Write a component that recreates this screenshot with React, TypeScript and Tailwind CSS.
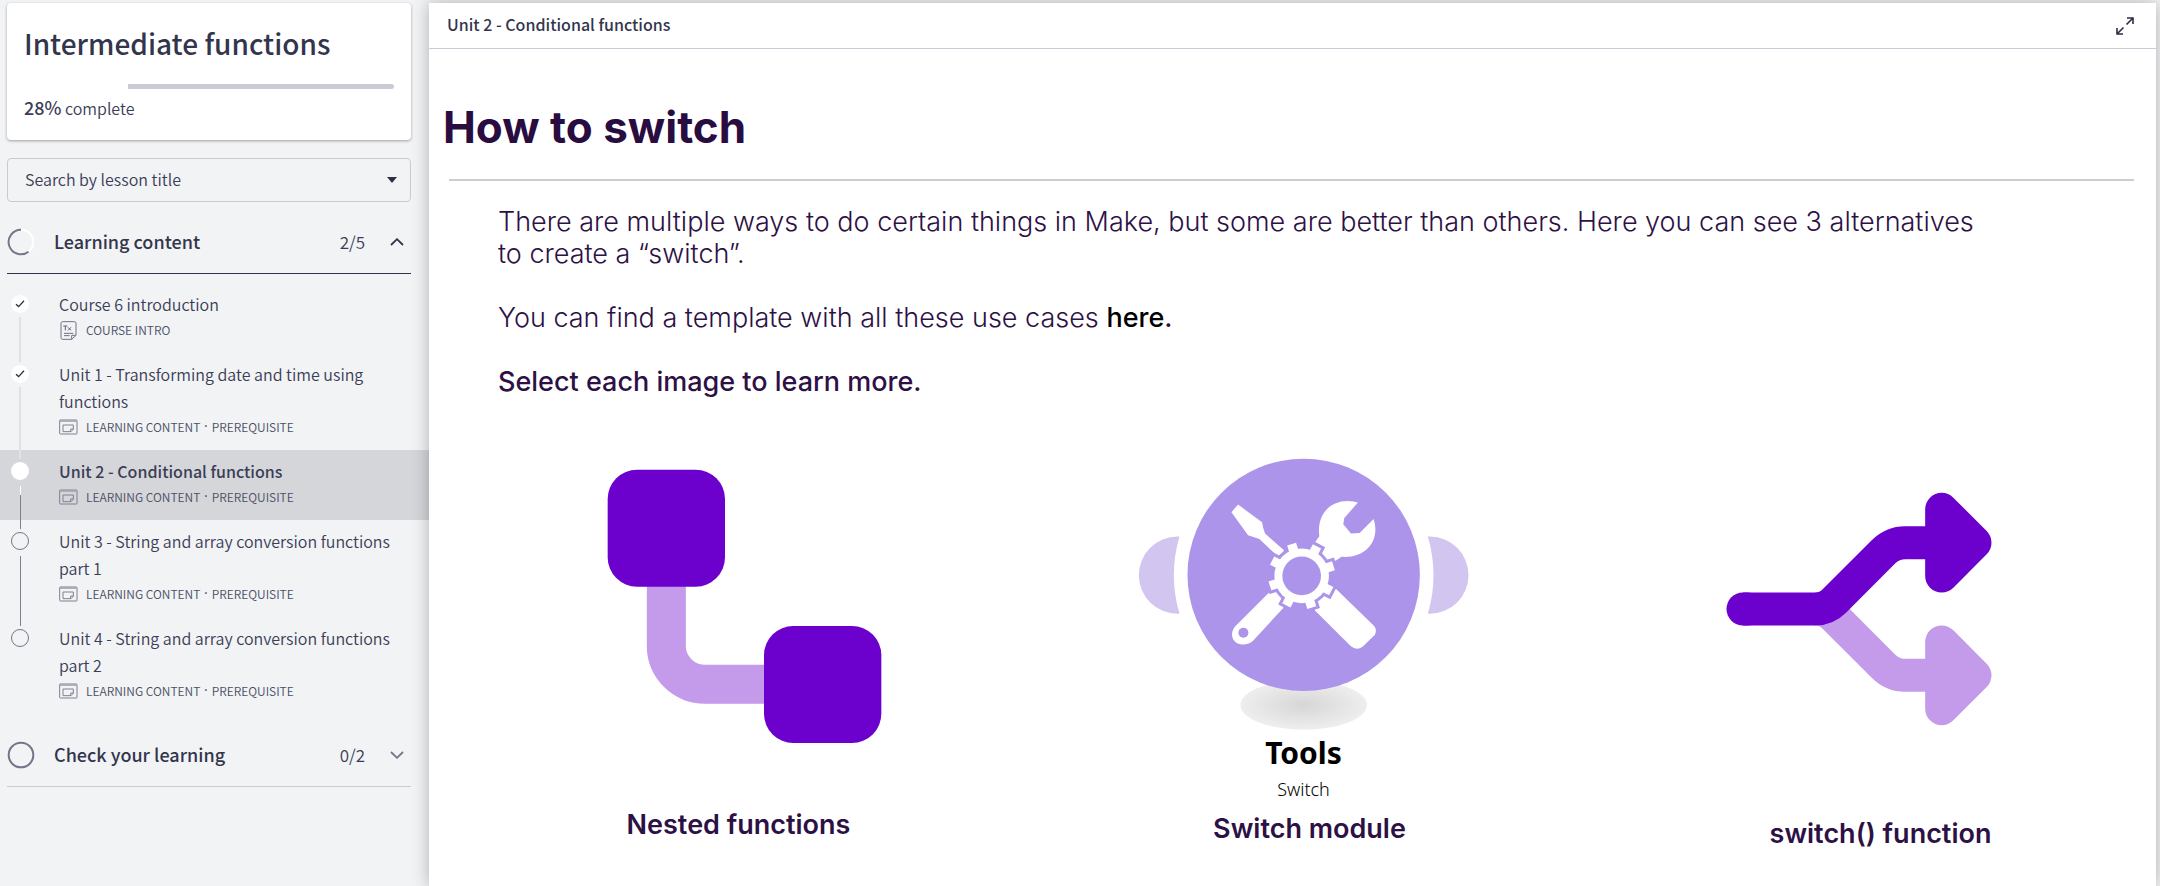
import React from "react";

type Status = "done" | "current" | "todo";
type Lesson = { title: string; meta: string[]; doc?: boolean; status: Status };

const lessons: Lesson[] = [
  { title: "Course 6 introduction", meta: ["COURSE INTRO"], doc: true, status: "done" },
  { title: "Unit 1 - Transforming date and time using functions", meta: ["LEARNING CONTENT", "PREREQUISITE"], status: "done" },
  { title: "Unit 2 - Conditional functions", meta: ["LEARNING CONTENT", "PREREQUISITE"], status: "current" },
  { title: "Unit 3 - String and array conversion functions part 1", meta: ["LEARNING CONTENT", "PREREQUISITE"], status: "todo" },
  { title: "Unit 4 - String and array conversion functions part 2", meta: ["LEARNING CONTENT", "PREREQUISITE"], status: "todo" },
];

function DocIcon() {
  return (
    <svg viewBox="0 0 57 57" className="size-[19px] shrink-0" fill="none" stroke="#6f7285" strokeWidth="3" aria-hidden="true">
      <path d="M11 2H46a5 5 0 0 1 5 5V43L38 55H11a5 5 0 0 1-5-5V7a5 5 0 0 1 5-5Z" />
      <path d="M51 43H38V55M15 37H43M15 44H32" />
      <path d="M13 15H25M19 15V28M27 19L36 28M36 19L27 28" stroke="#5b5e75" />
    </svg>
  );
}

function ContentIcon() {
  return (
    <svg viewBox="0 0 57 57" className="size-[19px] shrink-0" fill="none" stroke="#7d8091" strokeWidth="3" aria-hidden="true">
      <rect x="2" y="6" width="52" height="42" rx="2" />
      <path d="M3 9H53" stroke="#a3a5b3" strokeWidth="5" />
      <path d="M12 21H43V34L36 41H12ZM43 33H35V41" />
    </svg>
  );
}

function StatusDot({ status }: { status: Status }) {
  if (status === "todo") return <span className="size-[18px] shrink-0 rounded-full border border-[#73768a]" />;
  return (
    <span className="flex size-[18px] shrink-0 items-center justify-center rounded-full bg-white">
      {status === "done" && (
        <svg viewBox="0 0 10 10" className="size-[10px]" fill="none" stroke="#2d2f45" strokeWidth="1.3" aria-hidden="true">
          <path d="M1 5.2L3.6 7.6L9 1.8" />
        </svg>
      )}
    </span>
  );
}

function Connector({ status }: { status: Status }) {
  if (status === "done") return <span className="-mb-[9px] mt-1 w-[2px] flex-1 bg-[#dfe1e4]" />;
  return (
    <span className="-mb-[9px] mt-[6px] flex w-px flex-1 flex-col">
      {status === "current" && <span className="h-[9px] bg-white" />}
      <span className="flex-1 bg-[#7d8091]" />
    </span>
  );
}

function LessonRow({ lesson, last }: { lesson: Lesson; last: boolean }) {
  const current = lesson.status === "current";
  return (
    <li className={current ? "bg-[#d5d6da]" : ""}>
      <a href="#lesson" className="flex pl-[11px] pr-[30px]">
        <span className="relative z-10 flex w-[18px] shrink-0 flex-col items-center pt-3">
          <StatusDot status={lesson.status} />
          {!last && <Connector status={lesson.status} />}
        </span>
        <span className="block pb-[11px] pl-[30px] pt-2">
          <span className={current ? "block text-base font-medium leading-[27px]" : "block text-base leading-[27px]"}>{lesson.title}</span>
          <span className="flex h-6 items-center text-xs text-[#4c4f66]">
            {lesson.doc ? <DocIcon /> : <ContentIcon />}
            {lesson.meta.map((part, i) => (
              <React.Fragment key={part}>
                {i > 0 && <span className="ml-1 font-['Noto_Sans',sans-serif] font-medium">·</span>}
                <span className={i > 0 ? "ml-1" : "ml-2"}>{part}</span>
              </React.Fragment>
            ))}
          </span>
        </span>
      </a>
    </li>
  );
}

function Chevron({ up }: { up?: boolean }) {
  return (
    <svg viewBox="0 0 14 8" className="h-2 w-[14px]" fill="none" stroke={up ? "#33354d" : "#73768a"} strokeWidth="1.8" aria-hidden="true">
      <path d={up ? "M1 7L7 1.2L13 7" : "M1 1L7 6.8L13 1"} />
    </svg>
  );
}

function Sidebar() {
  return (
    <aside className="w-[429px] shrink-0 pt-[3px] font-['Noto_Sans_CJK_SC','Noto_Sans',sans-serif] font-[350] text-[#3b3d56]">
      <section className="ml-[7px] mr-[18px] rounded-[4px] bg-white px-[17px] pb-5 pt-5 shadow-[0_1px_3px_rgba(0,0,0,0.35)]">
        <h1 className="text-[28px] font-medium leading-10 text-[#33354d]">Intermediate functions</h1>
        <div role="progressbar" aria-label="Course progress" aria-valuenow={28} className="mt-[21px] flex h-[5px] justify-end overflow-hidden rounded-full bg-white">
          <div className="w-[72%] bg-[#cacbd5]" />
        </div>
        <p className="mt-[6px] h-[25px] text-base leading-6"><span className="text-lg font-medium leading-6">28%</span> complete</p>
      </section>

      <div className="ml-[7px] mr-[18px] mt-[18px] flex h-11 items-center rounded-[4px] border border-[#c9cad6] pl-[17px] pr-[13px]">
        <input aria-label="Search by lesson title" placeholder="Search by lesson title" className="min-w-0 flex-1 bg-transparent pb-[2px] text-base outline-none placeholder:text-[#3b3d56]" />
        <button aria-label="Show lessons">
          <svg viewBox="0 0 10 6" className="h-[6px] w-[10px]" fill="#2d2f45" aria-hidden="true"><path d="M0 0H10L5 6Z" /></svg>
        </button>
      </div>

      <button className="ml-[7px] mr-[18px] mt-[9px] flex h-[63px] w-[404px] items-center border-b border-[#33354d] pr-[7px] text-left">
        <svg viewBox="0 0 28 28" className="size-7" fill="none" strokeWidth="2" aria-hidden="true">
          <circle cx="14" cy="14" r="12.3" stroke="#fff" />
          <path d="M14 1.7A12.3 12.3 0 1 0 21.5 23.7" stroke="#73768a" />
        </svg>
        <span className="ml-[19px] flex-1 pb-[2px] text-lg font-medium text-[#33354d]">Learning content</span>
        <span className="mr-[25px] text-[17px]">2/5</span>
        <Chevron up />
      </button>

      <ul className="mt-[9px]">
        {lessons.map((lesson, i) => (
          <LessonRow key={lesson.title} lesson={lesson} last={i === lessons.length - 1} />
        ))}
      </ul>

      <button className="ml-[7px] mr-[18px] mt-[10px] flex h-[63px] w-[404px] items-center border-b border-[#c9cad6] pr-[7px] text-left">
        <svg viewBox="0 0 28 28" className="size-7" fill="none" strokeWidth="2" aria-hidden="true">
          <circle cx="14" cy="14" r="12.3" stroke="#73768a" />
        </svg>
        <span className="ml-[19px] flex-1 pb-[2px] text-lg font-medium text-[#33354d]">Check your learning</span>
        <span className="mr-[25px] text-[17px]">0/2</span>
        <Chevron />
      </button>
    </aside>
  );
}

function NestedArt() {
  return (
    <svg viewBox="-4 0 1080 1107" className="h-[369px] w-[360px]" aria-hidden="true">
      <path d="M318 420V618A117 115 0 0 0 435 733H640" fill="none" stroke="#c49aeb" strokeWidth="117" />
      <rect x="142" y="89" width="352" height="351" rx="88" fill="#6c00cc" />
      <rect x="611" y="558" width="352" height="351" rx="88" fill="#6c00cc" />
    </svg>
  );
}

const toothAngles = [27.4, 72.4, 117.4, 162.4, 207.4, 252.4, 297.4, 342.4];

function GearShape() {
  return (
    <>
      <circle cx="605" cy="408" r="82" />
      {toothAngles.map((a) => (
        <path key={a} d="M591 340V308H619V340Z" transform={`rotate(${a} 605 408)`} />
      ))}
    </>
  );
}

function ToolsArt() {
  return (
    <svg viewBox="90 0 1080 880" className="h-[293px] w-[360px]" aria-hidden="true">
      <defs>
        <radialGradient id="ground">
          <stop offset="0" stopColor="#d6d6d6" />
          <stop offset="1" stopColor="#eeeeee" />
        </radialGradient>
      </defs>
      <ellipse cx="611" cy="796" rx="190" ry="74" fill="url(#ground)" />
      <path d="M238 290H232A116 116 0 0 0 232 522H238Q204 406 238 290Z" fill="#d2c5f0" />
      <path d="M984 290H990A116 116 0 0 1 990 522H984Q1018 406 984 290Z" fill="#d2c5f0" />
      <circle cx="611" cy="405" r="349" fill="#ab94ea" />
      <g fill="#fff">
        <path d="M414 194L394 217L444 286L478 297L528 345Q534 349 540 344L550 335L552 331L495 281L490 266L486 247Z" />
        <path d="M645 307L658 289C650 230 684 183 743 183Q762 183 774 188L733 234L730 253L753 281L779 279L821 237C842 300 800 356 725 351L708 362L670 375L645 345Z" />
        <path d="M709 448L822 558Q832 570 825 585L788 621Q770 634 752 619L645 512L640 440Z" />
        <path d="M507 458L405 560C391 577 393 600 410 610C426 618 446 615 459 603L549 505L570 450Z" />
      </g>
      <circle cx="430" cy="579" r="15" fill="#ab94ea" />
      <g fill="#ab94ea" stroke="#ab94ea" strokeWidth="18"><GearShape /></g>
      <g fill="#fff"><GearShape /></g>
      <circle cx="605" cy="408" r="58" fill="#ab94ea" />
    </svg>
  );
}

function BranchArt() {
  return (
    <svg viewBox="62 0 1080 1134" className="h-[378px] w-[360px]" strokeWidth="99" aria-hidden="true">
      <g fill="none" stroke="#c49aeb">
        <path d="M404 507A82 82 0 0 1 462 531L610 679A92 92 0 0 0 675 706H760" />
        <path d="M784 606L884 706L784 806Z" fill="#c49aeb" strokeLinejoin="round" />
      </g>
      <g fill="none" stroke="#6c00cc">
        <path d="M188 507H404A82 82 0 0 0 462 483L610 335A92 92 0 0 1 675 308H760" />
        <path d="M188 507H200" strokeLinecap="round" />
        <path d="M784 208L884 308L784 408Z" fill="#6c00cc" strokeLinejoin="round" />
      </g>
    </svg>
  );
}

function Option({ label, children }: { label: string; children: React.ReactNode }) {
  return (
    <button className="flex flex-col items-center justify-start">
      {children}
      <span className="text-[27px] font-semibold leading-8 text-[#2d1145]">{label}</span>
    </button>
  );
}

export default function App() {
  return (
    <div className="flex min-h-screen bg-[#f1f3f5]">
      <Sidebar />
      <main className="relative z-20 mr-1 mt-[3px] min-w-0 flex-1 bg-white font-['Inter',sans-serif] shadow-[0_0_16px_rgba(0,0,0,0.28)]">
        <header className="flex h-[46px] items-center justify-between border-b border-[#c9cad6] pl-[18px] pr-[22px]">
          <h2 className="pb-1 font-['Noto_Sans_CJK_SC','Noto_Sans',sans-serif] text-base font-medium text-[#33354d]">Unit 2 - Conditional functions</h2>
          <button aria-label="Full screen">
            <svg viewBox="0 0 18 18" className="size-[18px]" fill="none" stroke="#2d2f45" strokeWidth="1.6" aria-hidden="true">
              <path d="M11 1H17V7M17 1L10.5 7.5M1 11V17H7M1 17L7.5 10.5" />
            </svg>
          </button>
        </header>
        <h1 className="pl-[14px] pt-12 text-[44px] font-bold leading-[60px] text-[#290c40]">How to switch</h1>
        <hr className="ml-5 mr-[22px] mt-[22px] border-t-2 border-[#d0cbcd]" />
        <div className="mt-[25px] max-w-[1630px] px-[69px] text-[27px] font-light leading-8 text-[#2d1145]">
          <p>There are multiple ways to do certain things in Make, but some are better than others. Here you can see 3 alternatives to create a “switch”.</p>
          <p className="mt-8">You can find a template with all these use cases <a href="#template" className="font-medium text-black">here</a><span className="font-medium">.</span></p>
          <p className="mt-8 font-medium">Select each image to learn more.</p>
        </div>
        <div className="grid grid-cols-3 gap-8 pb-9 pl-10 pr-[6px] pt-[42px]">
          <Option label="Nested functions"><NestedArt /></Option>
          <Option label="Switch module">
            <ToolsArt />
            <span className="flex w-[360px] flex-col items-center pb-2 pr-3 font-['Noto_Sans',sans-serif] text-black">
              <span className="text-[30px] font-bold leading-10">Tools</span>
              <span className="text-lg font-light leading-8">Switch</span>
            </span>
          </Option>
          <Option label="switch() function"><BranchArt /></Option>
        </div>
      </main>
    </div>
  );
}
